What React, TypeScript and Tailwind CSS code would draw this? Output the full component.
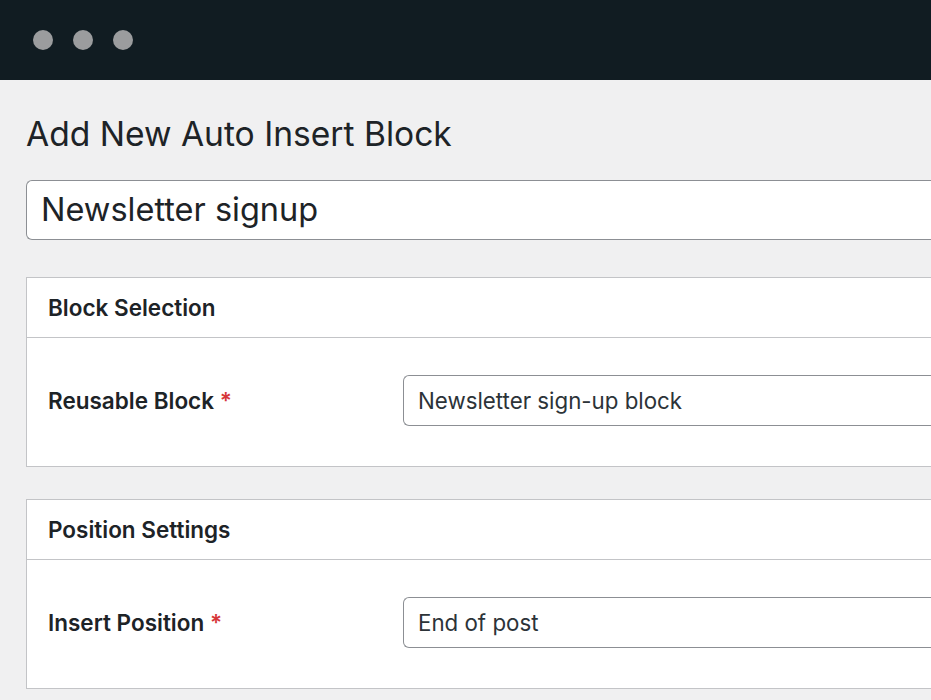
import React from 'react'

const Field = ({ label, value }: { label: string; value: string }) => (
  <div className="flex items-center h-[128px] pl-[21px] pb-[3px]">
    <div className="w-[355px] shrink-0 text-[22.5px] font-semibold text-[#1d2327]">
      {label} <span className="text-[#d63638]">*</span>
    </div>
    <div className="flex-1 h-[51px] flex items-center px-[14px] bg-white border border-[#8c8f94] rounded-l-[6px] border-r-0 text-[22.3px] text-[#2c3338]">
      {value}
    </div>
  </div>
)

const Panel = ({ title, label, value }: { title: string; label: string; value: string }) => (
  <div className="bg-white border border-[#c3c4c7] border-r-0">
    <div className="h-[60px] flex items-center px-[21px] border-b border-[#c3c4c7] text-[22.5px] font-semibold text-[#1d2327]">
      {title}
    </div>
    <Field label={label} value={value} />
  </div>
)

export default function App() {
  return (
    <div className="w-[931px] h-[700px] overflow-hidden bg-[#f0f0f1] font-['Inter',sans-serif]">
      <div className="h-[80px] bg-[#111c22] flex items-center gap-[20px] pl-[33px]">
        <div className="w-[20px] h-[20px] rounded-full bg-[#9b9c9e]" />
        <div className="w-[20px] h-[20px] rounded-full bg-[#9b9c9e]" />
        <div className="w-[20px] h-[20px] rounded-full bg-[#9b9c9e]" />
      </div>
      <div className="pl-[26px] pt-[32px]">
        <h1 className="text-[33.6px] leading-[44px] text-[#1d2327] font-normal">Add New Auto Insert Block</h1>
        <div className="mt-[24px] h-[60px] flex items-center px-[14px] bg-white border border-[#8c8f94] border-r-0 rounded-l-[6px] text-[32.5px] text-[#1d2327]">
          Newsletter signup
        </div>
        <div className="mt-[37px] flex flex-col gap-[32px]">
          <Panel title="Block Selection" label="Reusable Block" value="Newsletter sign-up block" />
          <Panel title="Position Settings" label="Insert Position" value="End of post" />
        </div>
      </div>
    </div>
  )
}
